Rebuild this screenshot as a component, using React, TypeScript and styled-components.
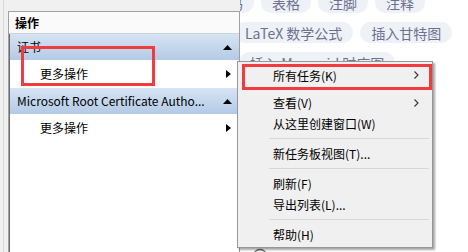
import React from "react";
import styled, { createGlobalStyle } from "styled-components";

const GlobalStyle = createGlobalStyle`
  html, body {
    margin: 0;
    padding: 0;
    width: 468px;
    height: 252px;
    overflow: hidden;
  }
  body {
    font-family: "Noto Sans CJK SC", "Noto Sans", sans-serif;
    background: #fff;
  }
`;

const Screen = styled.div`
  position: relative;
  display: flex;
  width: 468px;
  height: 252px;
  overflow: hidden;
`;

// left: MMC action pane
const LeftPane = styled.div`
  position: relative;
  z-index: 1;
  flex: 0 0 240px;
  display: flex;
  box-sizing: border-box;
  padding: 11px 0 0 8px;
  background: linear-gradient(to right, #f0f0f0 3px, #d9d9d9 3px, #d9d9d9 4px, #f0f0f0 4px);
`;

const ActionPanel = styled.div`
  flex: 1;
  display: flex;
  flex-direction: column;
  background: #fff;
  border-top: 1px solid #a0a0a0;
  border-left: 1px solid #a0a0a0;
  border-right: 1px solid #a0a0a0;
  box-shadow: inset 1px 0 0 #6d6d6d;
  font-size: 12px;
  line-height: 16px;
  color: #000;
`;

const PanelTitle = styled.div`
  height: 21px;
  display: flex;
  align-items: center;
  padding-left: 6px;
  font-weight: bold;
  background: #fafafa;
  border-bottom: 1px solid #c9d3dc;
`;

const SectionHeader = styled.div`
  height: 26px;
  display: flex;
  align-items: center;
  justify-content: space-between;
  padding: 0 7px 0 7px;
  margin-left: 1px;
  background: linear-gradient(#d6e4f3, #b3cae6);
  white-space: nowrap;
`;

const ActionRow = styled.div`
  height: 28px;
  display: flex;
  align-items: center;
  justify-content: space-between;
  padding: 0 8px 0 31px;
`;

const UpArrow = () => (
  <svg width="9" height="5" viewBox="0 0 9 5">
    <polygon points="0,5 4.5,0 9,5" fill="#000" />
  </svg>
);

const RightArrow = () => (
  <svg width="5" height="8" viewBox="0 0 5 8">
    <polygon points="0,0 5,4 0,8" fill="#000" />
  </svg>
);

// right: page behind the menu
const ContentArea = styled.div`
  flex: 1;
  display: flex;
  flex-direction: column;
  overflow: hidden;
  background: #fff;
`;

const ChipRow = styled.div<{ $shift: number; $top: number }>`
  display: flex;
  gap: 7px;
  margin-left: ${(p) => p.$shift}px;
  margin-top: ${(p) => p.$top}px;
  white-space: nowrap;
`;

const Chip = styled.span`
  flex: none;
  height: 21px;
  display: flex;
  align-items: center;
  padding: 0 11px;
  border-radius: 11px;
  background: #eef1f6;
  color: #6d7092;
  font-size: 14px;
`;

const Divider = styled.div`
  margin-top: 56px;
  height: 1px;
  background: #ebebeb;
`;

const FooterIcon = styled.div`
  margin: 119px 0 0 12px;
  line-height: 0;
`;

// context menu
const Menu = styled.div`
  position: absolute;
  z-index: 3;
  left: 237px;
  top: 61px;
  width: 196px;
  box-sizing: border-box;
  padding: 2px 0;
  background: #f0f0f0;
  border: 1px solid #979797;
  box-shadow: 2px 2px 2px rgba(0, 0, 0, 0.35);
  font-size: 12px;
  color: #000;
`;

const MenuItem = styled.div<{ $tall?: boolean }>`
  height: ${(p) => (p.$tall ? 22 : 21)}px;
  margin-bottom: ${(p) => (p.$tall ? 6 : 0)}px;
  display: flex;
  align-items: center;
  justify-content: space-between;
  padding: 0 13px 0 35px;
`;

const MenuSeparator = styled.div`
  height: 1px;
  margin: 4px 3px 4px 31px;
  background: #d7d7d7;
`;

const Chevron = () => (
  <svg width="5" height="8" viewBox="0 0 5 8">
    <polyline points="0.5,0.5 4,4 0.5,7.5" fill="none" stroke="#333" strokeWidth="1.1" />
  </svg>
);

// red annotation frames
const Mark = styled.div<{ $x: number; $y: number; $w: number; $h: number }>`
  position: absolute;
  z-index: 5;
  left: ${(p) => p.$x}px;
  top: ${(p) => p.$y}px;
  width: ${(p) => p.$w}px;
  height: ${(p) => p.$h}px;
  box-sizing: border-box;
  border: 3px solid #f03c3f;
`;

const menuItems: (string | null)[] = [
  "所有任务(K)",
  "查看(V)",
  "从这里创建窗口(W)",
  null,
  "新任务板视图(T)...",
  null,
  "刷新(F)",
  "导出列表(L)...",
  null,
  "帮助(H)",
];

export default function App() {
  return (
    <Screen>
      <GlobalStyle />
      <LeftPane>
        <ActionPanel>
          <PanelTitle>操作</PanelTitle>
          <SectionHeader>
            <span>证书</span>
            <UpArrow />
          </SectionHeader>
          <ActionRow>
            <span>更多操作</span>
            <RightArrow />
          </ActionRow>
          <SectionHeader>
            <span>Microsoft Root Certificate Autho...</span>
            <UpArrow />
          </SectionHeader>
          <ActionRow>
            <span>更多操作</span>
            <RightArrow />
          </ActionRow>
        </ActionPanel>
      </LeftPane>

      <ContentArea>
        <ChipRow $shift={-36} $top={-8}>
          <Chip>代码</Chip>
          <Chip>表格</Chip>
          <Chip>注脚</Chip>
          <Chip>注释</Chip>
        </ChipRow>
        <ChipRow $shift={-6} $top={9}>
          <Chip>LaTeX 数学公式</Chip>
          <Chip>插入甘特图</Chip>
        </ChipRow>
        <ChipRow $shift={-1} $top={9}>
          <Chip>插入 Mermaid 时序图</Chip>
        </ChipRow>
        <Divider />
        <FooterIcon>
          <svg width="16" height="16" viewBox="0 0 16 16">
            <circle cx="8" cy="8" r="6.5" fill="none" stroke="#666" strokeWidth="1.3" />
          </svg>
        </FooterIcon>
      </ContentArea>

      <Menu>
        {menuItems.map((label, i) =>
          label === null ? (
            <MenuSeparator key={i} />
          ) : (
            <MenuItem key={i} $tall={i === 0}>
              <span>{label}</span>
              {i < 2 ? <Chevron /> : null}
            </MenuItem>
          )
        )}
      </Menu>

      <Mark $x={21} $y={46} $w={134} $h={40} />
      <Mark $x={242} $y={64} $w={190} $h={26} />
    </Screen>
  );
}
